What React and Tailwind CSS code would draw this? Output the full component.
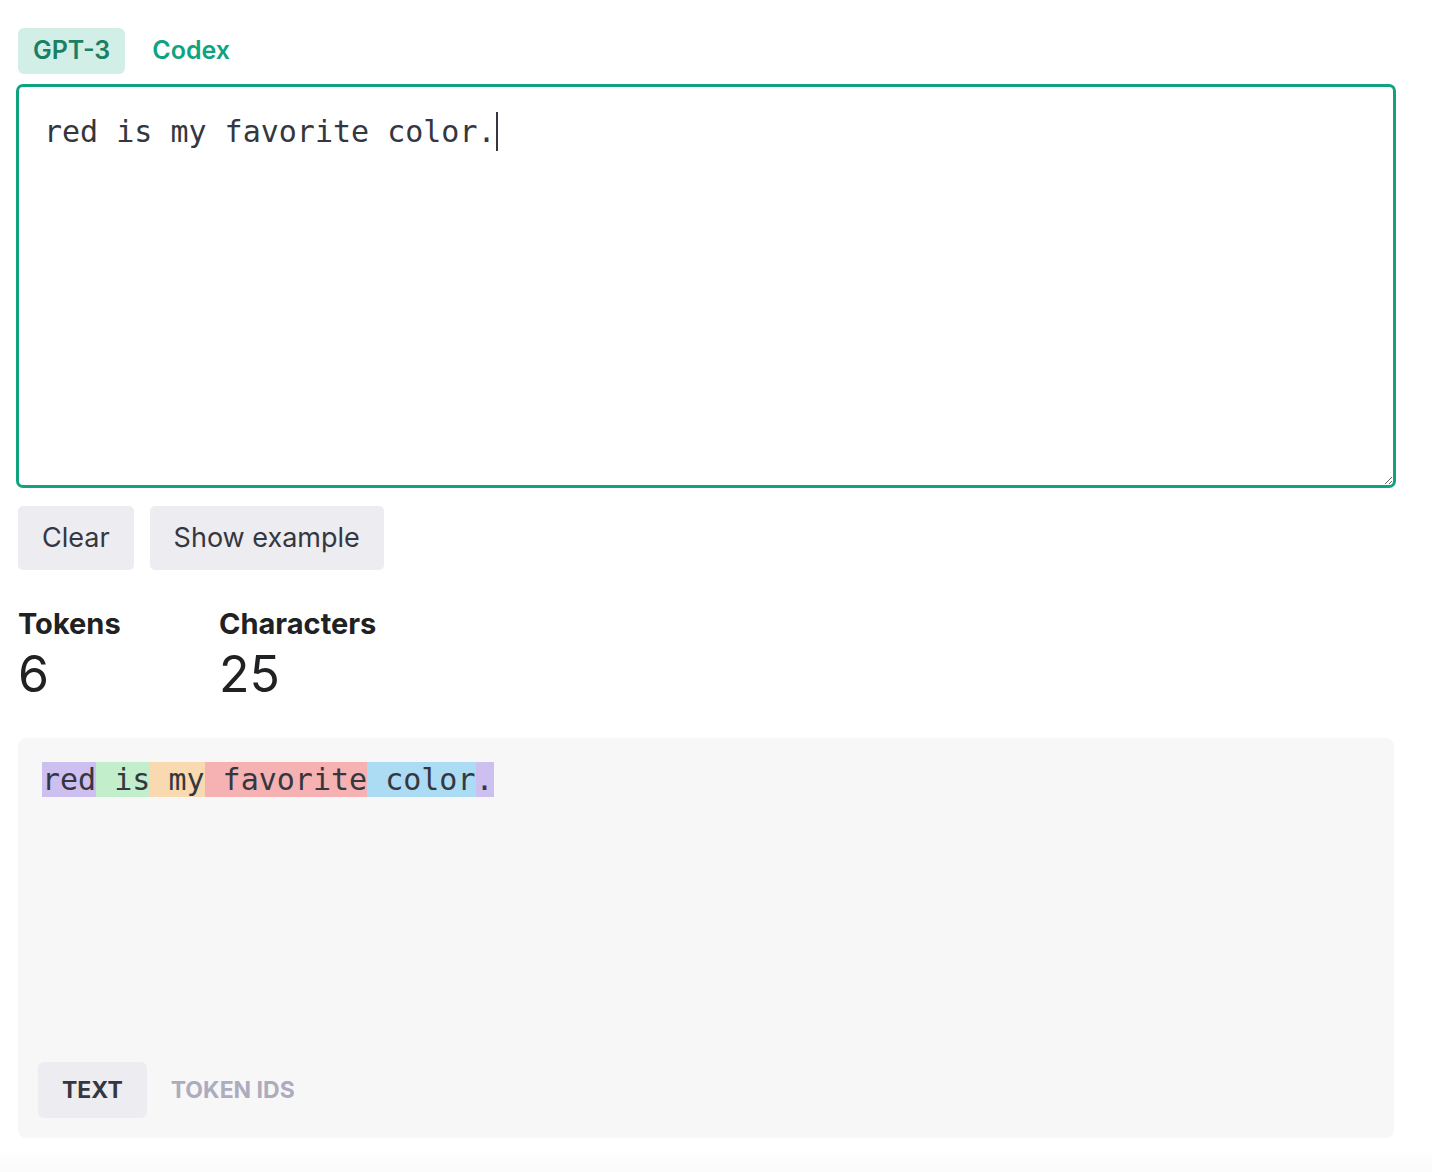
import React, { useState } from "react";

const mono = { fontFamily: '"DejaVu Sans Mono", "Liberation Mono", monospace' };

const tokens = [
  { text: "red", color: "bg-[#cdbff0]" },
  { text: " is", color: "bg-[#c2eecb]" },
  { text: " my", color: "bg-[#f8d9b0]" },
  { text: " favorite", color: "bg-[#f6b2b3]" },
  { text: " color", color: "bg-[#acdcf3]" },
  { text: ".", color: "bg-[#cdbff0]" },
];

const App = () => {
  const [text, setText] = useState("red is my favorite color.");
  const [model, setModel] = useState("gpt3");
  const [view, setView] = useState("text");

  // caret drawn over the textarea, placed after the last character
  const caretLeft = 28 + text.length * 18.06;

  return (
    <div className="min-h-[1172px] bg-white font-['Inter',sans-serif] text-[#202123]">
      <div className="ml-[18px] w-[1376px] pt-[28px]">
        <div className="flex gap-3">
          <button
            onClick={() => setModel("gpt3")}
            className={
              model === "gpt3"
                ? "h-[46px] px-[15px] rounded-[6px] bg-[#d2efe7] text-[#1a7f64] text-[25px] font-semibold"
                : "h-[46px] px-[15px] rounded-[6px] text-[#10a37f] text-[25px] font-semibold"
            }
          >
            GPT-3
          </button>
          <button
            onClick={() => setModel("codex")}
            className={
              model === "codex"
                ? "h-[46px] px-[15px] rounded-[6px] bg-[#d2efe7] text-[#1a7f64] text-[25px] font-semibold"
                : "h-[46px] px-[15px] rounded-[6px] text-[#10a37f] text-[25px] font-semibold"
            }
          >
            Codex
          </button>
        </div>

        <div className="relative mt-[10px] -mx-[2px] w-[1380px]">
          <textarea
            value={text}
            onChange={(e) => setText(e.target.value)}
            style={mono}
            className="block w-full h-[404px] border-[3px] border-[#10a37f] rounded-[7px] px-[25px] pt-[22px] text-[30px] leading-[45px] text-[#353740] caret-[#353740] outline-none"
          />
          {text.indexOf("\n") === -1 && text.length < 70 && (
            <span
              className="absolute top-[28px] w-[2px] h-[39px] bg-[#353740] pointer-events-none"
              style={{ left: caretLeft }}
            />
          )}
        </div>

        <div className="mt-[18px] flex gap-4">
          <button
            onClick={() => setText("")}
            className="h-[64px] px-6 rounded-[5px] bg-[#ececf1] text-[27px] text-[#353740]"
          >
            Clear
          </button>
          <button className="h-[64px] px-6 rounded-[5px] bg-[#ececf1] text-[27px] text-[#353740]">
            Show example
          </button>
        </div>

        <div className="mt-[36px] flex">
          <div className="w-[201px]">
            <div className="text-[29px] leading-[36px] font-bold">Tokens</div>
            <div className="mt-[4px] text-[50px] leading-[56px] font-normal">6</div>
          </div>
          <div>
            <div className="text-[29px] leading-[36px] font-bold">Characters</div>
            <div className="mt-[4px] text-[50px] leading-[56px] font-normal">{text.length}</div>
          </div>
        </div>

        <div className="mt-[36px] h-[400px] rounded-[8px] bg-[#f7f7f8] flex flex-col justify-between">
          <div className="px-6 pt-[24px]">
            <div style={mono} className="text-[30px] leading-[36px] text-[#353740] whitespace-pre">
              {tokens.map((t, i) => (
                <span key={i} className={t.color}>
                  {t.text}
                </span>
              ))}
            </div>
          </div>
          <div className="flex px-5 pb-5">
            <button
              onClick={() => setView("text")}
              className={
                view === "text"
                  ? "h-[56px] px-6 rounded-[6px] bg-[#ececf1] text-[23px] font-bold text-[#353740]"
                  : "h-[56px] px-6 rounded-[6px] text-[23px] font-bold text-[#acacbe]"
              }
            >
              TEXT
            </button>
            <button
              onClick={() => setView("ids")}
              className={
                view === "ids"
                  ? "h-[56px] px-6 rounded-[6px] bg-[#ececf1] text-[23px] font-bold text-[#353740]"
                  : "h-[56px] px-6 rounded-[6px] text-[23px] font-bold text-[#acacbe]"
              }
            >
              TOKEN IDS
            </button>
          </div>
        </div>
      </div>
      <div className="mt-[10px] h-[24px] bg-gradient-to-b from-white to-[#fafafa]" />
    </div>
  );
};

export default App;
